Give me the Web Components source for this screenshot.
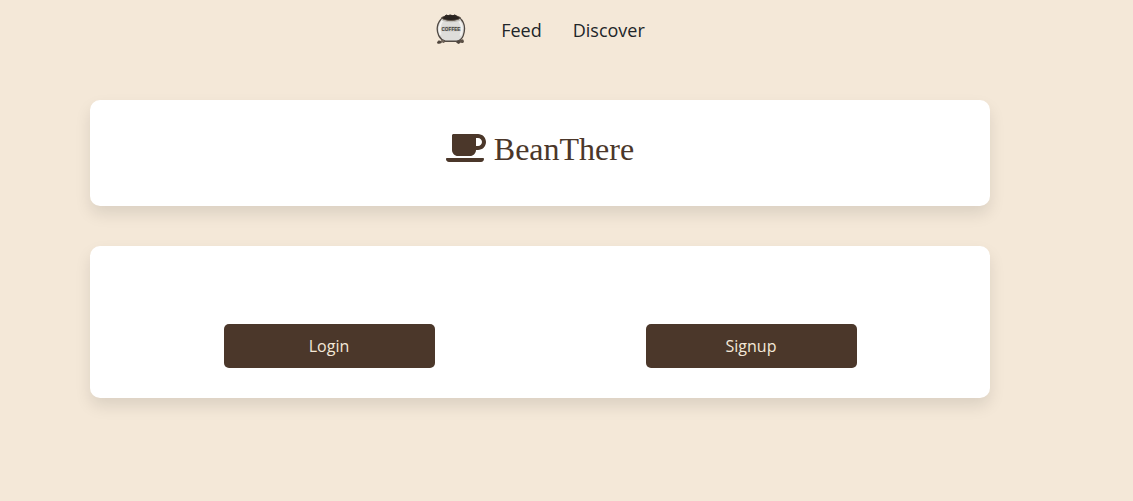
<!DOCTYPE html>
<html lang="en">
<head>
<meta charset="utf-8">
<meta name="viewport" content="width=device-width, initial-scale=1">
<title>BeanThere</title>
<style>
  :root { --cream: #f4e8d8; --bean: #4b372a; --ink: #212529; }
  body { margin: 0; background: var(--cream); color: var(--ink); font: 16px/24px "Open Sans", "Noto Sans", sans-serif; }
</style>
</head>
<body>
<bean-page>
  <bean-nav slot="nav"></bean-nav>
  <bean-card><bean-brand>BeanThere</bean-brand></bean-card>
  <bean-card>
    <bean-actions>
      <bean-button>Login</bean-button>
      <bean-button>Signup</bean-button>
    </bean-actions>
  </bean-card>
</bean-page>

<template id="page">
  <style>
    :host { display: block; padding-right: 53px; }
    main { display: flex; flex-direction: column; gap: 40px; max-width: 900px; margin: 40px auto; }
  </style>
  <slot name="nav"></slot>
  <main><slot></slot></main>
</template>

<template id="nav">
  <style>
    :host { display: block; }
    nav { display: flex; justify-content: center; align-items: center; gap: 31px; height: 60px; }
    a { color: inherit; text-decoration: none; font-size: 18px; line-height: 24px; }
    .logo { display: flex; padding: 0 3px 2px 0; }
    svg { display: block; width: 32px; height: 32px; }
    text { font: bold 5px "Liberation Sans", sans-serif; }
  </style>
  <nav aria-label="Main">
    <a class="logo" href="#home" aria-label="Home">
      <svg viewBox="0 0 34 34" aria-hidden="true">
        <path d="M6 30l4-2 2 2-3 2zM2 31l2-2 3 1-1 2-3 1zM22 30l4-3 3 2 1 3-3-1-2 2z" fill="#62564b"/>
        <path d="M8 5C2 10 1 18 4 24c2 4 4 5 7 6h12c4-1 6-3 7-6 2-6 2-14-4-19z" fill="#deddda" stroke="#514a44" stroke-width="1.4"/>
        <path d="M8 8c-3 4-4 9-2 15M26 9c3 4 3 10 1 15" fill="none" stroke="#f4f3f1" stroke-width="2"/>
        <path d="M7 5c3-3 17-3 20 0-2 4-18 4-20 0z" fill="#29231f" stroke="#62564b" stroke-width="1"/>
        <path d="M10 4l2-2 2 1 2-1 3 1 2-1 3 2" fill="#29231f" stroke="#29231f" stroke-width="1"/>
        <path d="M7 7c5 3 15 3 20 0" fill="none" stroke="#b8b4ae" stroke-width="1"/>
        <path d="M7 15q10-2 20 0v4q-10 1-20 0z" fill="#c6c4c0"/>
        <text x="17" y="19" text-anchor="middle" fill="#403c38">COFFEE</text>
        <ellipse cx="5" cy="31" rx="2" ry="1.3" fill="#4d443d"/>
        <ellipse cx="8" cy="30" rx="2" ry="1.2" fill="#71655b"/>
        <ellipse cx="25" cy="31" rx="2" ry="1.3" fill="#4d443d"/>
        <ellipse cx="29" cy="30" rx="1.6" ry="2" fill="#5a4f45"/>
      </svg>
    </a>
    <a href="#feed">Feed</a>
    <a href="#discover">Discover</a>
  </nav>
</template>

<template id="card">
  <style>
    :host { display: block; padding: 30px 28px; background: #fff; border-radius: 10px; box-shadow: 0 8px 16px rgba(0, 0, 0, .1); }
  </style>
  <slot></slot>
</template>

<template id="brand">
  <style>
    :host { display: block; color: var(--bean); }
    h1 { display: flex; justify-content: center; gap: 8px; margin: 0 0 8px; font: 400 32px/38px "Liberation Serif", serif; }
    svg { width: 40px; height: 32px; margin-top: 2px; fill: currentColor; }
  </style>
  <h1>
    <svg viewBox="0 0 640 512" aria-hidden="true"><path d="M192 384h192c53 0 96-43 96-96h32c70.600 0 128-57.400 128-128S582.600 32 512 32H120c-13.300 0-24 10.700-24 24v232c0 53 43 96 96 96zM512 96c35.300 0 64 28.700 64 64s-28.700 64-64 64h-32V96zM559.700 480H48.300c-47.600 0-61-64-36-64h583.300c25 0 11.800 64-35.900 64z"/></svg>
    <span><slot></slot></span>
  </h1>
</template>

<template id="actions">
  <style>
    :host { display: grid; grid-template-columns: 1fr 1fr; justify-items: center; padding-top: 48px; }
    ::slotted(*) { width: 50%; }
  </style>
  <slot></slot>
</template>

<template id="button">
  <style>
    :host { display: block; }
    button { display: block; width: 100%; padding: 10px; border: 0; border-radius: 5px; background: var(--bean); color: var(--cream); font: inherit; cursor: pointer; }
  </style>
  <button type="button"><slot></slot></button>
</template>

<script>
  for (const name of ["page", "nav", "card", "brand", "actions", "button"]) {
    customElements.define(`bean-${name}`, class extends HTMLElement {
      constructor() {
        super();
        this.attachShadow({ mode: "open" }).append(document.getElementById(name).content.cloneNode(true));
      }
    });
  }
</script>
</body>
</html>
